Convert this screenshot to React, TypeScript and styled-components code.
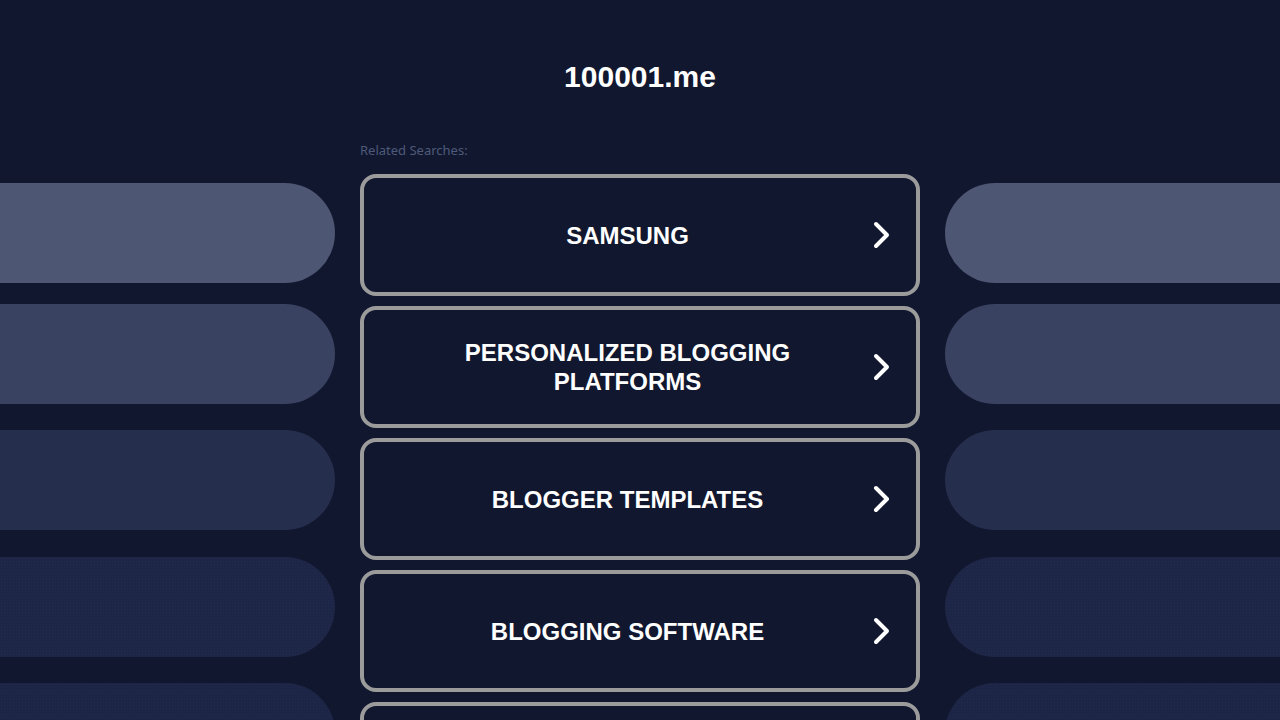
import React from 'react';
import styled, {createGlobalStyle} from 'styled-components';

const GlobalStyle = createGlobalStyle`
  html, body {
    margin: 0;
    padding: 0;
    background: #11172e;
    height: 720px;
    overflow: hidden;
  }
  * {
    box-sizing: border-box;
  }
`;

const Page = styled.div`
  width: 1280px;
  height: 720px;
  overflow: hidden;
  font-family: "Liberation Sans", Arial, sans-serif;
  color: white;
`;

const Title = styled.h1`
  margin: 0;
  padding-top: 59px;
  height: 130px;
  font-size: 30px;
  line-height: 36px;
  font-weight: 700;
  text-align: center;
`;

const Columns = styled.div`
  display: grid;
  grid-template-columns: 335px 560px 335px;
  column-gap: 25px;
`;

const PillColumn = styled.div`
  display: flex;
  flex-direction: column;
  padding-top: 53px;
`;

const Pill = styled.div<{$tone: string; $side: 'left' | 'right'; $gap: number; $dotted?: boolean}>`
  height: 100px;
  flex: none;
  margin-top: ${p => p.$gap}px;
  background-color: ${p => p.$tone};
  background-image: ${p => p.$dotted
    ? 'radial-gradient(rgba(90, 110, 160, 0.08) 0.6px, transparent 0.8px)'
    : 'none'};
  background-size: 3px 3px;
  border-radius: ${p => p.$side === 'left' ? '0 50px 50px 0' : '50px 0 0 50px'};
`;

const Center = styled.div`
  display: flex;
  flex-direction: column;
`;

const Label = styled.div`
  margin-top: 13px;
  margin-bottom: 16px;
  font-family: "Noto Sans", "Open Sans", sans-serif;
  font-size: 13px;
  line-height: 15px;
  color: #4e5a7a;
`;

const List = styled.div`
  display: flex;
  flex-direction: column;
  gap: 10px;
`;

const SearchButton = styled.a`
  display: flex;
  align-items: center;
  height: 122px;
  flex: none;
  border: 4px solid #9b9b9b;
  border-radius: 16px;
  background: #11172e;
  padding: 0 25px 0 18px;
  color: white;
  text-decoration: none;
  cursor: pointer;
`;

const ButtonText = styled.span`
  flex: 1;
  padding: 0 34px;
  text-align: center;
  font-size: 24px;
  line-height: 29px;
  font-weight: 700;
`;

const Chevron = () => (
  <svg width="18" height="28" viewBox="0 0 18 28" fill="none">
    <path d="M3 3 L14 14 L3 25" stroke="white" strokeWidth="4" strokeLinecap="round" strokeLinejoin="round"/>
  </svg>
);

const searches = [
  'SAMSUNG',
  'PERSONALIZED BLOGGING PLATFORMS',
  'BLOGGER TEMPLATES',
  'BLOGGING SOFTWARE',
  'BLOG HOSTING',
];

const pills = [
  {tone: '#4d5673', gap: 0},
  {tone: '#3a4261', gap: 21},
  {tone: '#262e4e', gap: 26},
  {tone: '#1e2647', gap: 27},
  {tone: '#1c2546', gap: 26},
];

function App() {
  return (
    <Page>
      <GlobalStyle/>
      <Title>100001.me</Title>
      <Columns>
        <PillColumn>
          {pills.map((p, i) =>
            <Pill key={i} $tone={p.tone} $gap={p.gap} $side="left" $dotted={i >= 3}/>
          )}
        </PillColumn>
        <Center>
          <Label>Related Searches:</Label>
          <List>
            {searches.map(s =>
              <SearchButton key={s}>
                <ButtonText>{s}</ButtonText>
                <Chevron/>
              </SearchButton>
            )}
          </List>
        </Center>
        <PillColumn>
          {pills.map((p, i) =>
            <Pill key={i} $tone={p.tone} $gap={p.gap} $side="right" $dotted={i >= 3}/>
          )}
        </PillColumn>
      </Columns>
    </Page>
  );
}

export default App;
